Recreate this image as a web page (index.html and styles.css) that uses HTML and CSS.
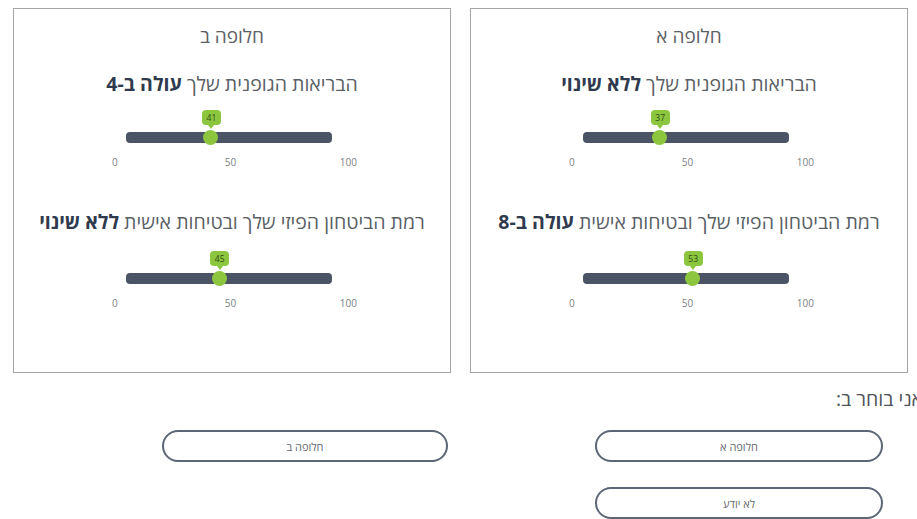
FILE: index.html
```html
<!DOCTYPE html>
<html lang="he" dir="rtl">
<head>
<meta charset="utf-8">
<title>בחירה בין חלופות</title>
<link rel="stylesheet" href="styles.css">
</head>
<body>
<main class="page">
  <section class="options">
    <article class="option">
      <h2 class="option-title">חלופה א</h2>
      <p class="attr">הבריאות הגופנית שלך <b>ללא שינוי</b></p>
      <div class="slider">
        <div class="track">
          <span class="thumb" style="left: 37%"><span class="bubble">37</span></span>
        </div>
        <div class="scale"><span>0</span><span>50</span><span>100</span></div>
      </div>
      <p class="attr attr-second">רמת הביטחון הפיזי שלך ובטיחות אישית <b>עולה ב-8</b></p>
      <div class="slider">
        <div class="track">
          <span class="thumb" style="left: 53%"><span class="bubble">53</span></span>
        </div>
        <div class="scale"><span>0</span><span>50</span><span>100</span></div>
      </div>
    </article>
    <article class="option">
      <h2 class="option-title">חלופה ב</h2>
      <p class="attr">הבריאות הגופנית שלך <b>עולה ב-4</b></p>
      <div class="slider">
        <div class="track">
          <span class="thumb" style="left: 41%"><span class="bubble">41</span></span>
        </div>
        <div class="scale"><span>0</span><span>50</span><span>100</span></div>
      </div>
      <p class="attr attr-second">רמת הביטחון הפיזי שלך ובטיחות אישית <b>ללא שינוי</b></p>
      <div class="slider">
        <div class="track">
          <span class="thumb" style="left: 45%"><span class="bubble">45</span></span>
        </div>
        <div class="scale"><span>0</span><span>50</span><span>100</span></div>
      </div>
    </article>
  </section>

  <p class="prompt">אני בוחר ב:</p>

  <section class="choices">
    <div class="choice-col choice-col-a">
      <button class="choice" type="button">חלופה א</button>
      <button class="choice" type="button">לא יודע</button>
    </div>
    <div class="choice-col choice-col-b">
      <button class="choice" type="button">חלופה ב</button>
    </div>
  </section>
</main>
</body>
</html>
```

FILE: styles.css
```css
* {
  box-sizing: border-box;
}

html, body {
  margin: 0;
  padding: 0;
  background: #ffffff;
}

body {
  width: 917px;
  height: 519px;
  overflow: hidden;
  font-family: "Open Sans", "DejaVu Sans", "Liberation Sans", sans-serif;
  color: #555b63;
}

.page {
  direction: rtl;
}

/* two option cards side by side */
.options {
  display: flex;
  gap: 19px;
  padding: 8px 9px 0 12px;
}

.option {
  flex: 0 0 438px;
  height: 365px;
  border: 1px solid #a3a5a8;
  padding-top: 15px;
  text-align: center;
}

.option-title {
  margin: 0;
  font-size: 19px;
  font-weight: 400;
  line-height: 24px;
  color: #5d6166;
}

.attr {
  margin: 23px 0 0;
  font-size: 19.5px;
  line-height: 26px;
  color: #5a5f66;
}

.attr b {
  font-weight: 700;
  color: #2f3a4e;
}

.attr-second {
  margin-top: 40px;
}

/* slider: dark track with a green thumb and value bubble */
.slider {
  direction: ltr;
  width: 250px;
  margin: 7px auto 0;
  padding-top: 28px;
}

.attr-second + .slider {
  margin-top: 10px;
}

.track {
  position: relative;
  width: 206px;
  height: 11px;
  margin-left: 19px;
  background: #4a5464;
  border-radius: 4px;
}

.thumb {
  position: absolute;
  top: -2px;
  width: 15px;
  height: 15px;
  margin-left: -7px;
  background: #8cc63f;
  border-radius: 50%;
}

.bubble {
  position: absolute;
  bottom: 20px;
  left: 50%;
  width: 19px;
  height: 15px;
  margin-left: -9px;
  background: #8cc63f;
  border-radius: 4px;
  font-size: 8.5px;
  line-height: 15px;
  color: #2f4a12;
  text-align: center;
}

.bubble::after {
  content: "";
  position: absolute;
  left: 50%;
  bottom: -4px;
  margin-left: -3px;
  border-left: 3px solid transparent;
  border-right: 3px solid transparent;
  border-top: 4px solid #8cc63f;
}

.scale {
  display: grid;
  grid-template-columns: 1fr 1fr 1fr;
  margin-top: 12px;
  padding-left: 5px;
  font-size: 10px;
  line-height: 14px;
  color: #7b7f85;
}

.scale span:first-child {
  text-align: left;
}

.scale span:nth-child(2) {
  text-align: center;
  padding-right: 8px;
}

.scale span:last-child {
  text-align: right;
}

.prompt {
  margin: 14px -6px 0 0;
  font-size: 19.5px;
  line-height: 24px;
  color: #4f545b;
  text-align: right;
}

/* answer buttons */
.choices {
  display: flex;
  margin-top: 19px;
}

.choice-col {
  display: flex;
  flex-direction: column;
  gap: 25px;
}

.choice-col-a {
  width: 288px;
  margin-right: 34px;
}

.choice-col-b {
  width: 286px;
  margin-right: 147px;
}

.choice {
  height: 32px;
  border: 2px solid #5c6677;
  border-radius: 16px;
  background: #ffffff;
  font-family: inherit;
  font-size: 11px;
  color: #666a70;
  cursor: pointer;
}
```
